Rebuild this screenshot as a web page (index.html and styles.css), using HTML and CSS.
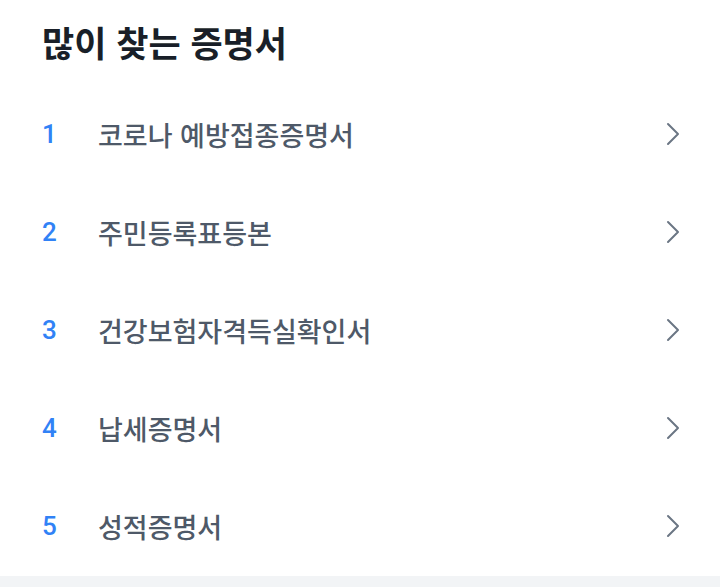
FILE: index.html
```html
<!DOCTYPE html>
<html lang="ko">
<head>
<meta charset="utf-8">
<link rel="stylesheet" href="styles.css">
</head>
<body>
<section class="card">
  <h2 class="title">많이 찾는 증명서</h2>
  <ul class="list">
    <li class="row"><span class="num">1</span><span class="name">코로나 예방접종증명서</span><svg class="chev" viewBox="0 0 14 24" width="14" height="24"><path d="M2 2 L12 12 L2 22" fill="none" stroke="currentColor" stroke-width="2" stroke-linecap="round" stroke-linejoin="round"/></svg></li>
    <li class="row"><span class="num">2</span><span class="name">주민등록표등본</span><svg class="chev" viewBox="0 0 14 24" width="14" height="24"><path d="M2 2 L12 12 L2 22" fill="none" stroke="currentColor" stroke-width="2" stroke-linecap="round" stroke-linejoin="round"/></svg></li>
    <li class="row"><span class="num">3</span><span class="name">건강보험자격득실확인서</span><svg class="chev" viewBox="0 0 14 24" width="14" height="24"><path d="M2 2 L12 12 L2 22" fill="none" stroke="currentColor" stroke-width="2" stroke-linecap="round" stroke-linejoin="round"/></svg></li>
    <li class="row"><span class="num">4</span><span class="name">납세증명서</span><svg class="chev" viewBox="0 0 14 24" width="14" height="24"><path d="M2 2 L12 12 L2 22" fill="none" stroke="currentColor" stroke-width="2" stroke-linecap="round" stroke-linejoin="round"/></svg></li>
    <li class="row"><span class="num">5</span><span class="name">성적증명서</span><svg class="chev" viewBox="0 0 14 24" width="14" height="24"><path d="M2 2 L12 12 L2 22" fill="none" stroke="currentColor" stroke-width="2" stroke-linecap="round" stroke-linejoin="round"/></svg></li>
  </ul>
</section>
<div class="footer"></div>
</body>
</html>
```

FILE: styles.css
```css
html, body {
  margin: 0;
  padding: 0;
  background: #ffffff;
}
body {
  font-family: "Noto Sans CJK KR", "Noto Sans", sans-serif;
  width: 720px;
  height: 587px;
  overflow: hidden;
  display: flex;
  flex-direction: column;
}
.card {
  padding: 17px 40px 0 42px;
  height: 559px;
}
.title {
  margin: 0;
  font-size: 35px;
  font-weight: 700;
  color: #191f28;
  letter-spacing: 0;
  line-height: 50px;
}
.list {
  list-style: none;
  margin: 0;
  padding: 0;
  margin-top: 18px;
}
.row {
  display: flex;
  align-items: center;
  height: 98px;
}
.num {
  width: 56px;
  font-family: "Roboto", "Noto Sans", sans-serif;
  font-size: 26px;
  font-weight: 500;
  color: #3182f6;
}
.name {
  flex: 1;
  font-size: 27px;
  color: #4e5968;
  letter-spacing: 0;
  font-weight: 500;
}
.chev {
  color: #6b7684;
  flex: none;
}
.footer {
  flex: 1;
  background: #f2f4f6;
}
```
